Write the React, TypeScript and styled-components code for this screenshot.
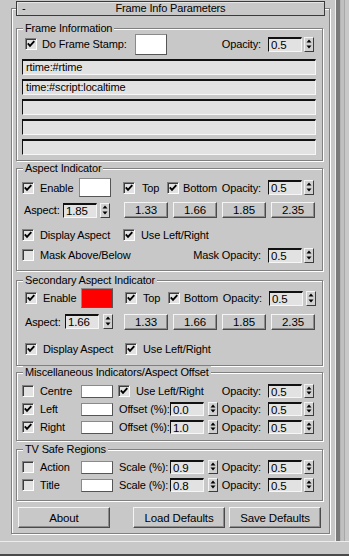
import React from 'react';
import styled, { createGlobalStyle } from 'styled-components';

const BG = '#c8c8c8';
const FIELD = '#e2e2e2';

const Global = createGlobalStyle`
  html, body { margin: 0; padding: 0; background: ${BG}; }
  body {
    font-family: "Liberation Sans", Arial, sans-serif;
    font-size: 11px;
    color: #000;
    letter-spacing: -0.15px;
  }
  * { box-sizing: border-box; }
`;

const Page = styled.div`
  width: 349px;
  height: 556px;
  display: flex;
  flex-direction: column;
  overflow: hidden;
  background: ${BG};
`;

const Body = styled.div`
  height: 541px;
  display: flex;
`;

const Main = styled.div`
  width: 331px;
  display: flex;
  flex-direction: column;
  padding: 8px 0 0 11px;
`;

const Strip = styled.div`
  width: 18px;
  display: flex;
  padding-left: 4px;
`;

const Track = styled.div`
  width: 10px;
  border-left: 1px solid #efefef;
  border-right: 1px solid #a8a8a8;
  background: linear-gradient(to right, #7a7a7a 0 4px, #b4b4b4 4px 5px, #c0c0c0 5px);
`;

const Footer = styled.div`
  height: 15px;
  border-top: 1px solid #ececec;
  border-bottom: 2px solid #4a4a4a;
`;

const Rollout = styled.div`
  width: 319px;
  border: 1px solid #808080;
  box-shadow: inset 1px 1px 0 #fff, 1px 1px 0 #fff;
  padding-bottom: 5px;
  display: flex;
  flex-direction: column;
`;

const Header = styled.div`
  margin: -8px 0 0 4px;
  width: 309px;
  height: 15px;
  border: 1px solid #3a3a3a;
  box-shadow: inset 1px 1px 0 #e6e6e6;
  background: ${BG};
  display: grid;
  grid-template-columns: 1fr auto 1fr;
  align-items: center;
  line-height: 13px;
`;

const Minus = styled.span`
  padding-left: 5px;
  font-size: 11px;
`;

const Group = styled.div<{ $mt: number; $pb: number }>`
  margin: ${(p) => p.$mt}px 0 0 4px;
  width: 307px;
  border: 1px solid #808080;
  box-shadow: inset 1px 1px 0 #fff, 1px 1px 0 #fff;
  padding: 0 6px ${(p) => p.$pb}px 5px;
  display: flex;
  flex-direction: column;
`;

const Legend = styled.div`
  align-self: flex-start;
  margin: -7px 0 0 1px;
  padding: 0 2px;
  height: 13px;
  line-height: 13px;
  background: ${BG};
  white-space: nowrap;
`;

const Row = styled.div<{ $h: number; $mt: number; $pl?: number }>`
  display: flex;
  align-items: center;
  height: ${(p) => p.$h}px;
  margin-top: ${(p) => p.$mt}px;
  padding-left: ${(p) => p.$pl ?? 0}px;
  white-space: nowrap;
`;

const CheckWrap = styled.div<{ $w?: number; $ml?: number; $gap: number }>`
  display: flex;
  align-items: center;
  gap: ${(p) => p.$gap}px;
  width: ${(p) => (p.$w ? `${p.$w}px` : 'auto')};
  margin-left: ${(p) => p.$ml ?? 0}px;
  flex-shrink: 0;
`;

const CheckBox = styled.div`
  width: 12px;
  height: 12px;
  flex-shrink: 0;
  background: ${FIELD};
  border: 1px solid;
  border-color: #808080 #fdfdfd #fdfdfd #808080;
  box-shadow: inset 1px 1px 0 #3c3c3c;
  display: flex;
  align-items: center;
  justify-content: center;
`;

const Swatch = styled.div<{ $color: string; $h: number; $ml?: number }>`
  width: 32px;
  height: ${(p) => p.$h}px;
  margin-left: ${(p) => p.$ml ?? 0}px;
  flex-shrink: 0;
  background: ${(p) => p.$color};
  border: 1px solid;
  border-color: #8a8a8a #555 #555 #8a8a8a;
`;

const TextField = styled.div<{ $mt: number }>`
  height: 16px;
  margin-top: ${(p) => p.$mt}px;
  background: ${FIELD};
  border-style: solid;
  border-width: 2px 1px 1px 1px;
  border-color: #111 #f6f6f6 #f6f6f6 #111;
  padding-left: 3px;
  line-height: 13px;
  white-space: nowrap;
`;

const SpinWrap = styled.div<{ $ml?: number | 'auto'; $mr?: number }>`
  display: flex;
  align-items: center;
  margin-left: ${(p) => (p.$ml === 'auto' || p.$ml === undefined ? 'auto' : `${p.$ml}px`)};
  margin-right: ${(p) => p.$mr ?? 0}px;
  flex-shrink: 0;
`;

const SpinLabel = styled.span<{ $w?: number }>`
  width: ${(p) => (p.$w ? `${p.$w}px` : 'auto')};
`;

const SpinField = styled.div<{ $h: number; $ml: number }>`
  width: 34px;
  height: ${(p) => p.$h}px;
  margin-left: ${(p) => p.$ml}px;
  background: ${FIELD};
  border-style: solid;
  border-width: 2px 1px 1px 1px;
  border-color: #111 #f6f6f6 #f6f6f6 #111;
  padding-left: 2px;
  display: flex;
  align-items: center;
  font-size: 11.5px;
`;

const Arrows = styled.div<{ $h: number; $ml: number }>`
  width: 10px;
  height: ${(p) => p.$h}px;
  margin-left: ${(p) => p.$ml}px;
  background: #d0d0d0;
  border: 1px solid;
  border-color: #f4f4f4 #3c3c3c #3c3c3c #f4f4f4;
  display: flex;
  align-items: center;
  justify-content: center;
`;

const Btn = styled.div<{ $w: number; $h: number; $ml: number }>`
  width: ${(p) => p.$w}px;
  height: ${(p) => p.$h}px;
  margin-left: ${(p) => p.$ml}px;
  flex-shrink: 0;
  background: ${BG};
  border: 1px solid;
  border-color: #f4f4f4 #4a4a4a #4a4a4a #f4f4f4;
  box-shadow: inset -1px -1px 0 #8c8c8c;
  display: flex;
  align-items: center;
  justify-content: center;
  font-size: 11.5px;
`;

const CellLabel = styled.span<{ $w: number; $pl: number }>`
  width: ${(p) => p.$w}px;
  padding-left: ${(p) => p.$pl}px;
  flex-shrink: 0;
`;

const ButtonRow = styled.div`
  display: flex;
  margin-top: 6px;
`;

type CheckProps = { label: string; checked?: boolean; w?: number; ml?: number; gap?: number };
const Check = ({ label, checked, w, ml, gap = 6 }: CheckProps) => (
  <CheckWrap $w={w} $ml={ml} $gap={gap}>
    <CheckBox>
      {checked && (
        <svg width="8" height="8" viewBox="0 0 8 8">
          <path d="M0.8 3.4 L3 5.8 L7.3 1.2" stroke="#000" strokeWidth="1.9" fill="none" />
        </svg>
      )}
    </CheckBox>
    <span>{label}</span>
  </CheckWrap>
);

const ArrowIcon = ({ h }: { h: number }) => (
  <svg width="8" height={h - 2} viewBox={`0 0 8 ${h - 2}`}>
    <polygon points={`4,1.5 6.5,4.5 1.5,4.5`} fill="#000" />
    <polygon points={`1.5,${h - 7.5} 6.5,${h - 7.5} 4,${h - 4.5}`} fill="#000" />
  </svg>
);

type SpinProps = {
  label?: string;
  value: string;
  h?: number;
  labelW?: number;
  gap?: number;
  arrowGap?: number;
  ml?: number | 'auto';
  mr?: number;
};
const Spin = ({ label, value, h = 15, labelW, gap = 7, arrowGap = 2, ml, mr }: SpinProps) => (
  <SpinWrap $ml={ml} $mr={mr}>
    {label && <SpinLabel $w={labelW}>{label}</SpinLabel>}
    <SpinField $h={h} $ml={label ? gap : 0}>{value}</SpinField>
    <Arrows $h={h} $ml={arrowGap}>
      <ArrowIcon h={h} />
    </Arrows>
  </SpinWrap>
);

const RatioButtons = ({ ml }: { ml: number }) => (
  <>
    {['1.33', '1.66', '1.85', '2.35'].map((v, i) => (
      <Btn key={v} $w={44} $h={16} $ml={i === 0 ? ml : 5}>
        {v}
      </Btn>
    ))}
  </>
);

export default function App() {
  return (
    <Page>
      <Global />
      <Body>
        <Main>
          <Rollout>
            <Header>
              <Minus>-</Minus>
              <span>Frame Info Parameters</span>
              <span />
            </Header>

            <Group $mt={12} $pb={5}>
              <Legend>Frame Information</Legend>
              <Row $h={22} $mt={-2}>
                <Check label="Do Frame Stamp:" checked w={110} ml={3} gap={5} />
                <Swatch $color="#fff" $h={21} />
                <Spin label="Opacity:" value="0.5" mr={2} />
              </Row>
              <TextField $mt={4}>rtime:#rtime</TextField>
              <TextField $mt={4}>time:#script:localtime</TextField>
              <TextField $mt={4} />
              <TextField $mt={4} />
              <TextField $mt={4} />
            </Group>

            <Group $mt={7} $pb={7}>
              <Legend>Aspect Indicator</Legend>
              <Row $h={21} $mt={2}>
                <Check label="Enable" checked w={57} />
                <Swatch $color="#fff" $h={19} />
                <Check label="Top" checked w={44} ml={12} gap={7} />
                <Check label="Bottom" checked gap={4} />
                <Spin label="Opacity:" value="0.5" mr={2} />
              </Row>
              <Row $h={16} $mt={4}>
                <CellLabel $w={41} $pl={2}>Aspect:</CellLabel>
                <Spin value="1.85" ml={0} arrowGap={3} />
                <RatioButtons ml={14} />
              </Row>
              <Row $h={16} $mt={9}>
                <Check label="Display Aspect" checked w={101} />
                <Check label="Use Left/Right" checked />
              </Row>
              <Row $h={16} $mt={4}>
                <Check label="Mask Above/Below" />
                <Spin label="Mask Opacity:" value="0.5" mr={2} />
              </Row>
            </Group>

            <Group $mt={9} $pb={8}>
              <Legend>Secondary Aspect Indicator</Legend>
              <Row $h={20} $mt={1}>
                <Check label="Enable" checked w={56} ml={3} />
                <Swatch $color="#ff0000" $h={20} />
                <Check label="Top" checked w={43} ml={12} gap={6} />
                <Check label="Bottom" checked gap={4} />
                <Spin label="Opacity:" value="0.5" arrowGap={3} mr={0} />
              </Row>
              <Row $h={17} $mt={5}>
                <CellLabel $w={43} $pl={3}>Aspect:</CellLabel>
                <Spin value="1.66" ml={0} arrowGap={4} />
                <RatioButtons ml={11} />
              </Row>
              <Row $h={16} $mt={11}>
                <Check label="Display Aspect" checked w={100} ml={3} />
                <Check label="Use Left/Right" checked />
              </Row>
            </Group>

            <Group $mt={6} $pb={6}>
              <Legend>Miscellaneous Indicators/Aspect Offset</Legend>
              <Row $h={14} $mt={5}>
                <Check label="Centre" w={59} />
                <Swatch $color="#fff" $h={13} />
                <Check label="Use Left/Right" checked ml={5} />
                <Spin label="Opacity:" value="0.5" h={14} mr={2} />
              </Row>
              <Row $h={14} $mt={4}>
                <Check label="Left" checked w={59} />
                <Swatch $color="#fff" $h={13} />
                <Spin label="Offset (%):" labelW={51} gap={0} value="0.0" h={14} ml={6} arrowGap={4} />
                <Spin label="Opacity:" value="0.5" h={14} mr={2} />
              </Row>
              <Row $h={14} $mt={4}>
                <Check label="Right" checked w={59} />
                <Swatch $color="#fff" $h={13} />
                <Spin label="Offset (%):" labelW={51} gap={0} value="1.0" h={14} ml={6} arrowGap={4} />
                <Spin label="Opacity:" value="0.5" h={14} mr={2} />
              </Row>
            </Group>

            <Group $mt={8} $pb={8}>
              <Legend>TV Safe Regions</Legend>
              <Row $h={14} $mt={4}>
                <Check label="Action" w={59} />
                <Swatch $color="#fff" $h={13} />
                <Spin label="Scale (%):" labelW={51} gap={0} value="0.9" h={14} ml={6} arrowGap={4} />
                <Spin label="Opacity:" value="0.5" h={14} mr={2} />
              </Row>
              <Row $h={14} $mt={4}>
                <Check label="Title" w={59} />
                <Swatch $color="#fff" $h={13} />
                <Spin label="Scale (%):" labelW={51} gap={0} value="0.8" h={14} ml={6} arrowGap={4} />
                <Spin label="Opacity:" value="0.5" h={14} mr={2} />
              </Row>
            </Group>

            <ButtonRow>
              <Btn $w={92} $h={21} $ml={6}>About</Btn>
              <Btn $w={92} $h={21} $ml={23}>Load Defaults</Btn>
              <Btn $w={92} $h={21} $ml={4}>Save Defaults</Btn>
            </ButtonRow>
          </Rollout>
        </Main>
        <Strip>
          <Track />
        </Strip>
      </Body>
      <Footer />
    </Page>
  );
}
